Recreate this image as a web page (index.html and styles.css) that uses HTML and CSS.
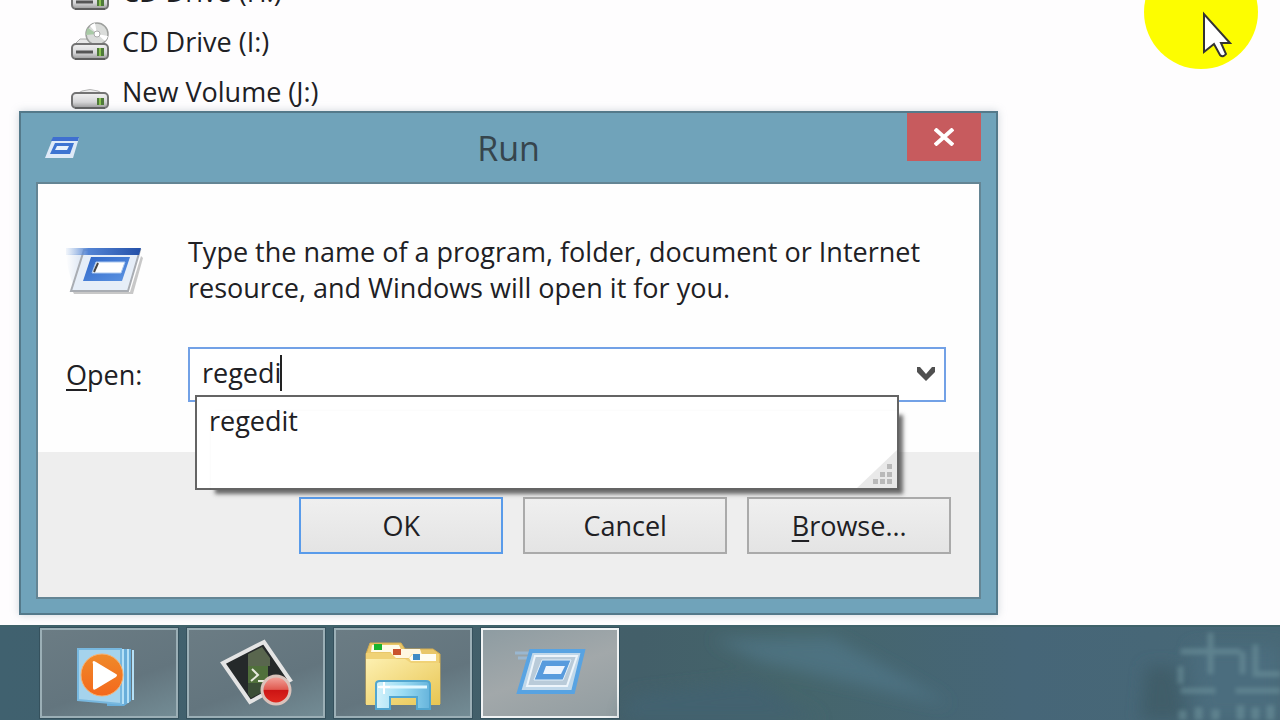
FILE: index.html
```html
<!DOCTYPE html>
<html lang="en">
<head>
<meta charset="utf-8">
<meta name="viewport" content="width=device-width, initial-scale=1">
<title>Run</title>
<link rel="stylesheet" href="styles.css">
</head>
<body>
<svg class="defs" width="0" height="0" aria-hidden="true">
  <defs>
    <linearGradient id="metal" x2="0" y2="1"><stop offset="0" stop-color="#f2f2f2"/><stop offset=".6" stop-color="#d6d6d8"/><stop offset="1" stop-color="#9a9a9a"/></linearGradient>
    <linearGradient id="blueBar" x2="1" y2="0"><stop offset="0" stop-color="#7fa6dc" stop-opacity=".1"/><stop offset=".3" stop-color="#5484d4"/><stop offset="1" stop-color="#2450a8"/></linearGradient>
    <linearGradient id="trail" x2="1" y2="0"><stop offset="0" stop-color="#b9cde8" stop-opacity="0"/><stop offset="1" stop-color="#b4cae8"/></linearGradient>
    <linearGradient id="blueBox" x2="1" y2="1"><stop offset="0" stop-color="#2f66c8"/><stop offset="1" stop-color="#5c94e2"/></linearGradient>
    <linearGradient id="orange" x2="0" y2="1"><stop offset="0" stop-color="#ef8a2a"/><stop offset="1" stop-color="#f4681c"/></linearGradient>
    <linearGradient id="folder" x2="1" y2="1"><stop offset="0" stop-color="#fdf0b0"/><stop offset="1" stop-color="#e8c552"/></linearGradient>
    <linearGradient id="stand" x2="1" y2="0"><stop offset="0" stop-color="#d4f2fb"/><stop offset=".5" stop-color="#9bdcf3"/><stop offset="1" stop-color="#66b4dc"/></linearGradient>
    <linearGradient id="rec" x2="0" y2="1"><stop offset="0" stop-color="#f4a8a0"/><stop offset=".48" stop-color="#e05a50"/><stop offset=".5" stop-color="#cc1414"/><stop offset="1" stop-color="#e02a20"/></linearGradient>
    <symbol id="drive" viewBox="0 0 40 22">
      <path d="M3 8 L12 3 Q20 0 28 3 L37 8Z" fill="#ededed" stroke="#b5b5b5"/>
      <rect x="2" y="5" width="36" height="15" rx="4" fill="url(#metal)" stroke="#737373" stroke-width="2"/>
      <path d="M5 20H35" stroke="#5d5d5d" stroke-width="2"/>
      <rect x="27" y="10" width="7" height="7" fill="#4f7a3a"/><path d="M30 10v7" stroke="#8bc34f" stroke-width="2"/>
    </symbol>
    <symbol id="cd-drive" viewBox="0 0 40 40">
      <path d="M3 24 L10 17 H30 L37 24Z" fill="#e8e8e8" stroke="#aaa"/>
      <circle cx="27" cy="12" r="11" fill="#dadcda" stroke="#9d9f9d" stroke-width="1.500"/>
      <path d="M27 12 L20 4 A11 11 0 0 1 25 1Z M27 12 L35 19 A11 11 0 0 0 38 14Z" fill="#fff"/>
      <path d="M27 12L16 13A11 11 0 0 1 18 6Z" fill="#a9caa6"/>
      <circle cx="27" cy="12" r="3" fill="#fff" stroke="#aaa"/>
      <rect x="2" y="22" width="36" height="15" rx="4" fill="url(#metal)" stroke="#737373" stroke-width="2"/>
      <path d="M5 37H35" stroke="#5d5d5d" stroke-width="2"/>
      <path d="M6 30H23" stroke="#555" stroke-width="3"/>
      <rect x="27" y="26" width="7" height="8" fill="#4f7a3a"/><path d="M30 26v8" stroke="#8bc34f" stroke-width="2"/>
    </symbol>
  </defs>
</svg>
<main class="desktop">
  <ul class="drives">
    <li class="drive"><svg class="drive-icon" viewBox="0 0 40 40"><use href="#cd-drive"/></svg>CD Drive (H:)</li>
    <li class="drive"><svg class="drive-icon" viewBox="0 0 40 40"><use href="#cd-drive"/></svg>CD Drive (I:)</li>
    <li class="drive"><svg class="drive-icon" viewBox="0 0 40 40"><use href="#drive" y="16" width="40" height="22"/></svg>New Volume (J:)</li>
  </ul>

  <section class="dialog" role="dialog" aria-labelledby="dialog-title">
    <header class="titlebar">
      <svg class="title-icon" viewBox="0 0 36 24" aria-hidden="true">
        <path d="M9 2H35L29 22H1Z" fill="#dfeaf8"/><path d="M9 1H35L34 5H7Z" fill="#3f6fd0"/>
        <path d="M11 7H30L26 18H6Z" fill="#3e74d2"/><path d="M13 10H25L23 14H11Z" fill="#e8f1fc"/>
      </svg>
      <h1 class="title" id="dialog-title">Run</h1>
      <button class="close" type="button" aria-label="Close"><svg class="close-icon" viewBox="0 0 20 18"><path d="M1 1L19 17M19 1L1 17" stroke="#fff" stroke-width="4"/></svg></button>
    </header>
    <form class="panel">
      <div class="content">
        <svg class="run-icon" viewBox="0 0 78 52" aria-hidden="true">
          <path d="M0 8H20L8 40Q2 28 0 8Z" fill="url(#trail)" opacity=".6"/>
          <path d="M7 46H64L75 10L77 12L67 48H8Z" fill="#777" opacity=".4"/>
          <path d="M18 4H74L62 45H5Z" fill="#e6eef8" stroke="#a9adb3" stroke-width="2"/>
          <path d="M0 2H75L73 9H0Z" fill="url(#blueBar)"/>
          <path d="M25 11H64L56 35H17Z" fill="url(#blueBox)"/>
          <path d="M30 16H59L55 27H26Z" fill="#fff" stroke="#aac8f0"/><path d="M32 17L28 26" stroke="#444" stroke-width="2"/>
        </svg>
        <p class="message">Type the name of a program, folder, document or Internet resource, and Windows will open it for you.</p>
        <label class="open-label" for="open-field"><u>O</u>pen:</label>
        <div class="combo">
          <input class="combo-input" id="open-field" type="text" value="regedi" autocomplete="off" spellcheck="false">
          <span class="caret"></span>
          <button class="combo-arrow" type="button" aria-label="Show history"><svg class="arrow-icon" viewBox="0 0 20 16"><path d="M1 1H4L10 8L16 1H19V6L10 15L1 6Z" fill="#505050"/></svg></button>
          <ul class="suggestions">
            <li class="suggestion">regedit</li>
            <li class="grip"><svg class="grip-icon" viewBox="0 0 40 38"><path d="M40 0V38H0Z" fill="#e9e9e9"/><g fill="#b9b9b9"><path d="M30 14h5v5h-5zM30 22h5v5h-5zM30 29h5v5h-5zM23 22h5v5h-5zM23 29h5v5h-5zM16 29h5v5h-5z"/></g></svg></li>
          </ul>
        </div>
      </div>
      <footer class="actions">
        <button class="action action-default" type="button">OK</button>
        <button class="action" type="button">Cancel</button>
        <button class="action" type="button"><span><u>B</u>rowse...</span></button>
      </footer>
    </form>
  </section>

  <svg class="pointer" viewBox="0 0 116 70" aria-hidden="true">
    <circle cx="58" cy="12" r="57" fill="#fdfd00"/>
    <path d="M61 14V52L71 44L77 55Q80 58 83 54L78 43H87Z" fill="#fff" stroke="#333" stroke-width="2"/>
  </svg>
</main>

<nav class="taskbar" aria-label="Taskbar">
  <svg class="wallpaper" viewBox="0 0 680 95" preserveAspectRatio="none" aria-hidden="true">
    <defs><filter id="soft"><feGaussianBlur stdDeviation="8"/></filter><filter id="fine"><feGaussianBlur stdDeviation="2"/></filter></defs>
    <g filter="url(#soft)"><path d="M110 12L230 10L300 50L350 80L220 50L160 36Z" fill="#547a8d" opacity=".6"/><path d="M30 70L150 55L220 95H20Z" fill="#426270"/><path d="M545 40H575L585 95H540Z" fill="#3f5d69"/><path d="M590 20H680V95H600Z" fill="#4c6d7e"/></g>
    <g filter="url(#fine)" fill="none" stroke="#7399a1" opacity=".5"><path d="M580 25H640M610 6V48M580 40V58M642 25V48M655 18V48H680M635 65H680M580 65H615" stroke-width="6"/><path d="M582 85V95M598 82V95M615 84V95M640 80V95M655 82V95M670 80V95" stroke-width="8"/></g>
  </svg>
  <button class="task" type="button" aria-label="Windows Media Player">
    <svg class="task-icon" viewBox="0 0 80 76"><path d="M38 12H62V64L55 69H38Z" fill="#69aeda"/><path d="M9 12H52V67L9 63Z" fill="#a5d3ec" stroke="#78b8df" stroke-width="2"/><path d="M54 12V67M59 12V66M64 13V63" stroke="#b5e0f6" stroke-width="2"/><circle cx="33" cy="38" r="21" fill="url(#orange)" stroke="#f9b06d"/><path d="M25 24Q23 24 24 27V51Q24 54 27 52L47 40Q49 38 47 37L27 25Z" fill="#fff"/></svg>
  </button>
  <button class="task" type="button" aria-label="Screen recorder">
    <svg class="task-icon" viewBox="0 0 80 76"><path d="M7 26L48 5L74 43L34 65Z" fill="#25292a" stroke="#e4e4e4" stroke-width="4"/><path d="M32 17L46 10L54 21V29H32Z" fill="#59664e"/><path d="M32 29H52V46H32Z" fill="#50703b"/><path d="M32 46H52V52L35 61L32 57Z" fill="#3b4e36"/><path d="M36 32L42 38L35 44M42 44H48" fill="none" stroke="#e6eadd" stroke-width="2"/><circle cx="60" cy="53" r="14" fill="url(#rec)" stroke="#d9c2bb" stroke-width="3"/></svg>
  </button>
  <button class="task" type="button" aria-label="File Explorer">
    <svg class="task-icon" viewBox="0 0 80 76"><path d="M3 17L7 6H38L42 12L70 12L77 17V67H3Z" fill="#e9c76a" stroke="#d4ad50"/><path d="M9 8H36L39 15H8Z" fill="#fffbe8"/><path d="M11 7H19V13H11Z" fill="#19b42d"/><path d="M29 12H57L60 21H26Z" fill="#fff7df"/><path d="M30 12H38V18H30Z" fill="#c9532d"/><path d="M3 16H28L34 22H45L49 17H76V68H3Z" fill="#f0d276"/><path d="M3 22H42L48 26H77V68H3Z" fill="url(#folder)"/><path d="M50 17H73V24H48L46 21Z" fill="#fffdf2"/><path d="M50 17H57V23H50Z" fill="#3f8bc5"/><path d="M13 47Q13 44 17 44H63Q67 44 67 48V72H54V60H27V72H13Z" fill="url(#stand)" stroke="#52a6d0" stroke-width="2"/><path d="M17 50H64" stroke="#e2f8ff" stroke-width="3"/><path d="M21 45v12M15 50h12" stroke="#fff" stroke-width="2"/></svg>
  </button>
  <button class="task task-active" type="button" aria-label="Run">
    <svg class="task-icon" viewBox="0 0 80 76"><path d="M5 16H24M8 21H22" stroke="#9cc5ec" stroke-width="3" opacity=".6"/><path d="M21 14H73L63 55H9Z" fill="#c0d8ea" stroke="#58a3e2" stroke-width="4"/><path d="M25 19H67L57 49H17Z" fill="#b9cbd9" stroke="#edf5fb" stroke-width="2"/><path d="M32 23H61L53 43H24Z" fill="#589bdd" stroke="#e3f1fb"/><path d="M36 29H55L51 37H33Z" fill="#edf4fd"/></svg>
  </button>
</nav>
</body>
</html>
```
FILE: styles.css
```css
* { box-sizing: border-box; }

body {
  margin: 0;
  min-height: 100vh;
  display: flex;
  flex-direction: column;
  overflow: hidden;
  background: #fefdfe;
  color: #202024;
  font: 27px/36px "Open Sans", "Noto Sans", sans-serif;
}

button, input { font: inherit; color: inherit; }
ul { list-style: none; margin: 0; padding: 0; }
u { text-decoration-thickness: 2px; text-underline-offset: 4px; text-decoration-skip-ink: none; }
.defs { position: absolute; }

.desktop { position: relative; flex: 1; min-height: 625px; }

.drives { margin-top: -33px; padding-left: 70px; }
.drive { display: flex; align-items: center; gap: 12px; height: 50px; }
.drive-icon { width: 40px; height: 40px; }

.dialog {
  position: absolute;
  top: 111px;
  left: 19px;
  width: 76.5%;
  padding: 0 15px 14px;
  background: #70a3ba;
  border: 2px solid #54798a;
  box-shadow: 0 0 8px #8a9aa866;
}

.titlebar {
  display: grid;
  grid-template-columns: 1fr auto 1fr;
  align-items: center;
  height: 69px;
}
.title-icon { width: 36px; height: 24px; margin-left: 8px; }
.title { margin: 0; font-size: 34px; font-weight: 400; line-height: 44px; color: #36454d; }
.close {
  align-self: start;
  justify-self: end;
  display: grid;
  place-items: center;
  width: 74px;
  height: 48px;
  padding: 0;
  border: 0;
  background: #c75b5e;
}
.close-icon { width: 20px; height: 18px; }

.panel { border: 2px solid #648594; background: #fefefe; }

.content {
  display: grid;
  grid-template-columns: 122px 1fr;
  row-gap: 41px;
  padding: 50px 33px 50px 28px;
}
.run-icon { width: 78px; height: 52px; margin-top: 12px; }
.message { margin: 0; }
.open-label { align-self: center; }

.combo {
  position: relative;
  display: flex;
  align-items: center;
  height: 55px;
  padding: 0 0 4px 12px;
  border: 2px solid #72a1e6;
  background: #fff;
}
.combo-input {
  width: 78px;
  height: 40px;
  padding: 0;
  border: 0;
  outline: 0;
  background: none;
  field-sizing: content;
}
.caret { width: 2px; height: 36px; background: #222; }
.combo-arrow {
  margin-left: auto;
  display: grid;
  place-items: center;
  width: 36px;
  height: 47px;
  padding: 3px 0 0;
  border: 0;
  background: none;
}
.arrow-icon { width: 20px; height: 16px; }

.suggestions {
  position: absolute;
  z-index: 1;
  top: 46px;
  left: 5px;
  right: 45px;
  display: flex;
  flex-direction: column;
  justify-content: space-between;
  height: 95px;
  border: 2px solid #646464;
  background: #fff;
}
.suggestions::before {
  content: "";
  position: absolute;
  z-index: -1;
  inset: 14px -2px -2px 14px;
  box-shadow: 4px 4px 4px #484848cc;
}
.suggestion { padding: 6px 12px 0; }
.grip { height: 38px; text-align: right; }
.grip-icon { width: 40px; height: 38px; }

.actions {
  display: flex;
  justify-content: flex-end;
  gap: 20px;
  padding: 45px 28px 43px;
  background: #eee;
}
.action {
  width: 204px;
  height: 57px;
  padding: 0;
  border: 2px solid #aaa;
  background: linear-gradient(#efefef, #e4e4e4);
}
.action-default { border-color: #599bea; }

.pointer { position: absolute; top: 0; right: 21px; width: 116px; height: 70px; }

.taskbar {
  position: relative;
  display: flex;
  gap: 9px;
  height: 95px;
  padding: 1px 40px;
  border-top: 2px solid #3f626a;
  background: linear-gradient(90deg, #40616f, #435f69 50%, #45656b 62%, #466678 80%, #486876);
}
.wallpaper { position: absolute; top: 0; right: 0; width: 53%; height: 100%; }
.task {
  display: grid;
  align-items: end;
  justify-items: center;
  width: 138px;
  height: 90px;
  padding: 0;
  border: 2px solid #9bafb6;
  outline: 1px solid #35515d;
  background: linear-gradient(160deg, #6b7c84, #63757e 60%, #738c95);
}
.task-active { border-color: #f0f3f4; background: linear-gradient(160deg, #8e9ca2, #a2a8aa 50%, #929da1); }
.task-icon { width: 80px; height: 76px; margin-bottom: 3px; }
```
